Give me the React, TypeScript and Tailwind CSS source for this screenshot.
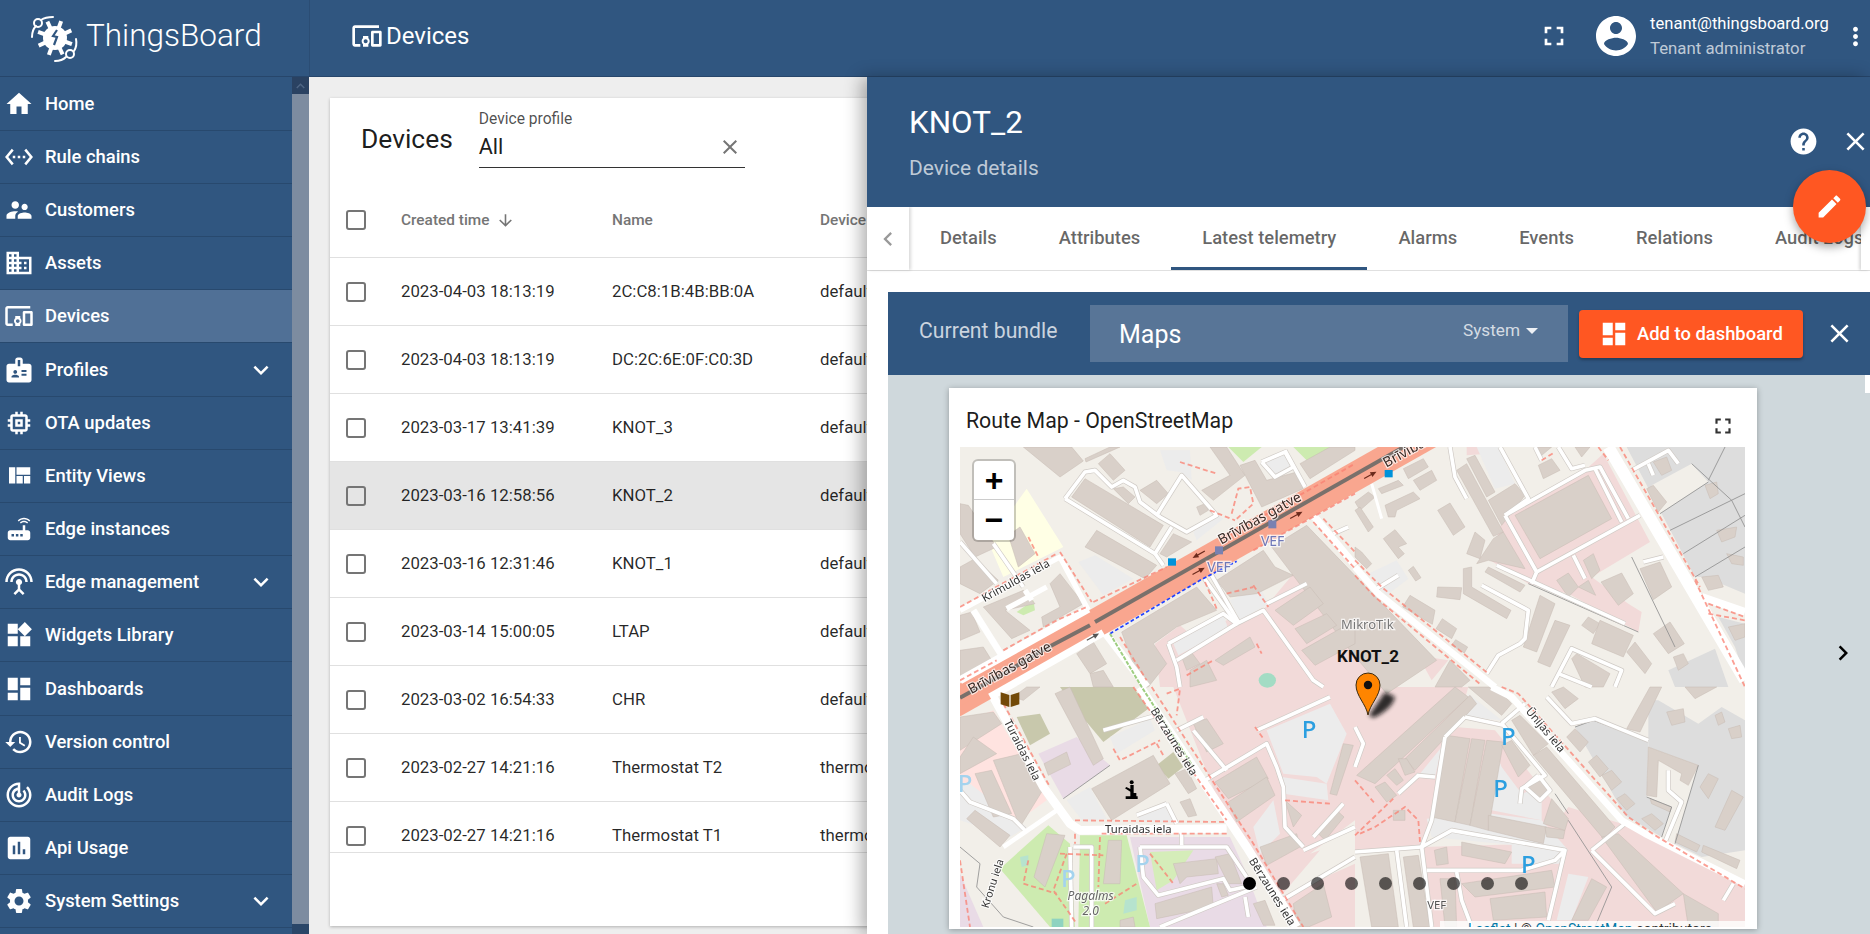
const ICONS: Record<string, string> = {
  home: 'M10 20v-6h4v6h5v-8h3L12 3 2 12h3v8z',
  rules: 'M7.77 6.76L6.23 5.48.82 12l5.41 6.52 1.54-1.28L3.42 12l4.35-5.24zM7 13h2v-2H7v2zm10-2h-2v2h2v-2zm-6 2h2v-2h-2v2zm6.77-7.52l-1.54 1.28L20.58 12l-4.35 5.24 1.54 1.28L23.18 12l-5.41-6.52z',
  customers: 'M16.5 12c1.38 0 2.49-1.12 2.49-2.5S17.88 7 16.5 7C15.12 7 14 8.12 14 9.5s1.12 2.5 2.5 2.5zM9 11c1.66 0 2.99-1.34 2.99-3S10.66 5 9 5C7.34 5 6 6.34 6 8s1.34 3 3 3zm7.5 3c-1.83 0-5.5.92-5.5 2.75V19h11v-2.25c0-1.83-3.67-2.75-5.5-2.75zM9 13c-2.33 0-7 1.17-7 3.5V19h7v-2.25c0-.85.33-2.34 2.37-3.47C10.5 13.1 9.66 13 9 13z',
  domain: 'M12 7V3H2v18h20V7H12zM6 19H4v-2h2v2zm0-4H4v-2h2v2zm0-4H4V9h2v2zm0-4H4V5h2v2zm4 12H8v-2h2v2zm0-4H8v-2h2v2zm0-4H8V9h2v2zm0-4H8V5h2v2zm10 12h-8v-2h2v-2h-2v-2h2v-2h-2V9h8v10zm-2-8h-2v2h2v-2zm0 4h-2v2h2v-2z',
  devices: 'M3 6h18V4H3c-1.1 0-2 .9-2 2v12c0 1.1.9 2 2 2h4v-2H3V6zm10 6H9v1.78c-.61.55-1 1.33-1 2.22s.39 1.67 1 2.22V20h4v-1.78c.61-.55 1-1.34 1-2.22s-.39-1.67-1-2.22V12zm-2 5.5c-.83 0-1.5-.67-1.5-1.5s.67-1.5 1.5-1.5 1.5.67 1.5 1.5-.67 1.5-1.5 1.5zM22 8h-6c-.5 0-1 .5-1 1v10c0 .5.5 1 1 1h6c.5 0 1-.5 1-1V9c0-.5-.5-1-1-1zm-1 10h-4v-8h4v8z',
  badge: 'M20 7h-5V4c0-1.1-.9-2-2-2h-2c-1.1 0-2 .9-2 2v3H4c-1.1 0-2 .9-2 2v11c0 1.1.9 2 2 2h16c1.1 0 2-.9 2-2V9c0-1.1-.9-2-2-2zM9 12c.83 0 1.5.67 1.5 1.5S9.83 15 9 15s-1.5-.67-1.5-1.5S8.17 12 9 12zm3 6H6v-.75c0-1 2-1.5 3-1.5s3 .5 3 1.5V18zm1-9h-2V4h2v5zm5 7.5h-4V15h4v1.5zm0-3h-4V12h4v1.5z',
  memory: 'M15 9H9v6h6V9zm-2 4h-2v-2h2v2zm8-2V9h-2V7c0-1.1-.9-2-2-2h-2V3h-2v2h-2V3H9v2H7c-1.1 0-2 .9-2 2v2H3v2h2v2H3v2h2v2c0 1.1.9 2 2 2h2v2h2v-2h2v2h2v-2h2c1.1 0 2-.9 2-2v-2h2v-2h-2v-2h2zm-4 6H7V7h10v10z',
  quilt: 'M10 18h5v-6h-5v6zm-6 0h5V5H4v13zm12 0h5v-6h-5v6zM10 5v6h11V5H10z',
  router: 'M20.2 5.9l.8-.8C19.6 3.7 17.8 3 16 3s-3.6.7-5 2.1l.8.8C13 4.8 14.5 4.2 16 4.2s3 .6 4.2 1.7zm-.9.8c-.9-.9-2.1-1.4-3.3-1.4s-2.4.5-3.3 1.4l.8.8c.7-.7 1.6-1 2.5-1 .9 0 1.8.3 2.5 1l.8-.8zM19 13h-2V9h-2v4H5c-1.1 0-2 .9-2 2v4c0 1.1.9 2 2 2h14c1.1 0 2-.9 2-2v-4c0-1.1-.9-2-2-2zM8 18H6v-2h2v2zm3.5 0h-2v-2h2v2zm3.5 0h-2v-2h2v2z',
  antenna: 'M12 5c-3.87 0-7 3.13-7 7h2c0-2.76 2.24-5 5-5s5 2.24 5 5h2c0-3.87-3.13-7-7-7zm1 9.29c.88-.39 1.5-1.26 1.5-2.29 0-1.38-1.12-2.5-2.5-2.5S9.5 10.62 9.5 12c0 1.02.62 1.9 1.5 2.29v3.3L7.59 21 9 22.41l3-3 3 3L16.41 21 13 17.59v-3.3zM12 1C5.93 1 1 5.93 1 12h2c0-4.97 4.03-9 9-9s9 4.03 9 9h2c0-6.07-4.93-11-11-11z',
  widgets: 'M13 13v8h8v-8h-8zM3 21h8v-8H3v8zM3 3v8h8V3H3zm13.66-1.31L11 7.34 16.66 13l5.66-5.66-5.66-5.65z',
  dashboard: 'M3 13h8V3H3v10zm0 8h8v-6H3v6zm10 0h8V11h-8v10zm0-18v6h8V3h-8z',
  history: 'M13 3c-4.97 0-9 4.03-9 9H1l3.89 3.89.07.14L9 12H6c0-3.87 3.13-7 7-7s7 3.13 7 7-3.13 7-7 7c-1.93 0-3.68-.79-4.94-2.06l-1.42 1.42C8.27 19.99 10.51 21 13 21c4.97 0 9-4.03 9-9s-4.03-9-9-9zm-1 5v5l4.28 2.54.72-1.21-3.5-2.08V8H12z',
  audit: 'M19.07 4.93l-1.41 1.41C19.1 7.79 20 9.79 20 12c0 4.42-3.58 8-8 8s-8-3.58-8-8c0-4.08 3.05-7.44 7-7.93v2.02C8.16 6.57 6 9.03 6 12c0 3.31 2.69 6 6 6s6-2.69 6-6c0-1.66-.67-3.16-1.76-4.24l-1.41 1.41C15.55 9.9 16 10.9 16 12c0 2.21-1.79 4-4 4s-4-1.79-4-4c0-1.86 1.28-3.41 3-3.86v2.14c-.6.35-1 .98-1 1.72 0 1.1.9 2 2 2s2-.9 2-2c0-.74-.4-1.38-1-1.72V2h-1C6.48 2 2 6.48 2 12s4.48 10 10 10 10-4.48 10-10c0-2.76-1.12-5.26-2.93-7.07z',
  chart: 'M19 3H5c-1.1 0-2 .9-2 2v14c0 1.1.9 2 2 2h14c1.1 0 2-.9 2-2V5c0-1.1-.9-2-2-2zM9 17H7v-7h2v7zm4 0h-2V7h2v10zm4 0h-2v-4h2v4z',
  settings: 'M19.14 12.94c.04-.3.06-.61.06-.94 0-.32-.02-.64-.07-.94l2.03-1.58c.18-.14.23-.41.12-.61l-1.92-3.32c-.12-.22-.37-.29-.59-.22l-2.39.96c-.5-.38-1.03-.7-1.62-.94l-.36-2.54c-.04-.24-.24-.41-.48-.41h-3.84c-.24 0-.43.17-.47.41l-.36 2.54c-.59.24-1.13.57-1.62.94l-2.39-.96c-.22-.08-.47 0-.59.22L2.74 8.87c-.12.21-.08.47.12.61l2.03 1.58c-.05.3-.09.63-.09.94s.02.64.07.94l-2.03 1.58c-.18.14-.23.41-.12.61l1.92 3.32c.12.22.37.29.59.22l2.39-.96c.5.38 1.03.7 1.62.94l.36 2.54c.05.24.24.41.48.41h3.84c.24 0 .44-.17.47-.41l.36-2.54c.59-.24 1.13-.56 1.62-.94l2.39.96c.22.08.47 0 .59-.22l1.92-3.32c.12-.22.07-.47-.12-.61l-2.01-1.58zM12 15.6c-1.98 0-3.6-1.62-3.6-3.6s1.62-3.6 3.6-3.6 3.6 1.62 3.6 3.6-1.62 3.6-3.6 3.6z',
  expand: 'M16.59 8.59L12 13.17 7.41 8.59 6 10l6 6 6-6z',
  fullscreen: 'M7 14H5v5h5v-2H7v-3zm-2-4h2V7h3V5H5v5zm12 7h-3v2h5v-5h-2v3zM14 5v2h3v3h2V5h-5z',
  account: 'M12 2C6.48 2 2 6.48 2 12s4.48 10 10 10 10-4.48 10-10S17.52 2 12 2zm0 3c1.66 0 3 1.34 3 3s-1.34 3-3 3-3-1.34-3-3 1.34-3 3-3zm0 14.2c-2.5 0-4.71-1.28-6-3.22.03-1.99 4-3.08 6-3.08 1.99 0 5.97 1.09 6 3.08-1.29 1.94-3.5 3.22-6 3.22z',
  more: 'M12 8c1.1 0 2-.9 2-2s-.9-2-2-2-2 .9-2 2 .9 2 2 2zm0 2c-1.1 0-2 .9-2 2s.9 2 2 2 2-.9 2-2-.9-2-2-2zm0 6c-1.1 0-2 .9-2 2s.9 2 2 2 2-.9 2-2-.9-2-2-2z',
  help: 'M12 2C6.48 2 2 6.48 2 12s4.48 10 10 10 10-4.48 10-10S17.52 2 12 2zm1 17h-2v-2h2v2zm2.07-7.75l-.9.92C13.45 12.9 13 13.5 13 15h-2v-.5c0-1.1.45-2.1 1.17-2.83l1.24-1.26c.37-.36.59-.86.59-1.41 0-1.1-.9-2-2-2s-2 .9-2 2H8c0-2.21 1.79-4 4-4s4 1.79 4 4c0 .88-.36 1.68-.93 2.25z',
  close: 'M19 6.41L17.59 5 12 10.59 6.41 5 5 6.41 10.59 12 5 17.59 6.41 19 12 13.41 17.59 19 19 17.59 13.41 12z',
  edit: 'M3 17.25V21h3.75L17.81 9.94l-3.75-3.75L3 17.25zM20.71 7.04c.39-.39.39-1.02 0-1.41l-2.34-2.34c-.39-.39-1.02-.39-1.41 0l-1.83 1.83 3.75 3.75 1.83-1.83z',
  down: 'M20 12l-1.41-1.41L13 16.17V4h-2v12.17l-5.58-5.59L4 12l8 8 8-8z',
  left: 'M15.41 7.41L14 6l-6 6 6 6 1.41-1.41L10.83 12z',
  right: 'M10 6L8.59 7.41 13.17 12l-4.58 4.59L10 18l6-6z',
}

function Icon({ name, className }: { name: string; className?: string }) {
  return (
    <svg viewBox="0 0 24 24" fill="currentColor" className={className} aria-hidden="true">
      <path d={ICONS[name]} />
    </svg>
  )
}

function Logo() {
  const spikes = [0, 45, 90, 135, 180, 225, 270, 315]
  return (
    <svg viewBox="0 0 60 56" className="h-[56px] w-[60px] shrink-0" aria-hidden="true">
      <g fill="none" stroke="#fff" strokeWidth="2" strokeLinecap="round">
        <circle cx="11" cy="13" r="4" />
        <path d="M5 27C5 22 7 18 9 16M14 10C17 8 21 7 26 7" />
        <circle cx="43" cy="44" r="4" />
        <path d="M49 29C50 34 49 38 47 41M39 47C36 50 33 51 28 51" />
      </g>
      <g stroke="#fff" strokeWidth="4">
        {spikes.map((a) => (
          <line key={a} x1="28" y1="28" x2="28" y2="10" transform={`rotate(${a + 20} 28 28)`} />
        ))}
      </g>
      <circle cx="28" cy="28" r="12" fill="#fff" />
      <path d="M30 20l-4 6 4 1-3 8" fill="none" stroke="#305680" strokeWidth="2.2" />
    </svg>
  )
}

const NAV = [
  { label: 'Home', icon: 'home' },
  { label: 'Rule chains', icon: 'rules' },
  { label: 'Customers', icon: 'customers' },
  { label: 'Assets', icon: 'domain' },
  { label: 'Devices', icon: 'devices', active: true },
  { label: 'Profiles', icon: 'badge', more: true, tall: true },
  { label: 'OTA updates', icon: 'memory' },
  { label: 'Entity Views', icon: 'quilt' },
  { label: 'Edge instances', icon: 'router' },
  { label: 'Edge management', icon: 'antenna', more: true },
  { label: 'Widgets Library', icon: 'widgets' },
  { label: 'Dashboards', icon: 'dashboard', tall: true },
  { label: 'Version control', icon: 'history' },
  { label: 'Audit Logs', icon: 'audit' },
  { label: 'Api Usage', icon: 'chart' },
  { label: 'System Settings', icon: 'settings', more: true },
]

const ROWS = [
  ['2023-04-03 18:13:19', '2C:C8:1B:4B:BB:0A', 'default'],
  ['2023-04-03 18:13:19', 'DC:2C:6E:0F:C0:3D', 'default'],
  ['2023-03-17 13:41:39', 'KNOT_3', 'default'],
  ['2023-03-16 12:58:56', 'KNOT_2', 'default'],
  ['2023-03-16 12:31:46', 'KNOT_1', 'default'],
  ['2023-03-14 15:00:05', 'LTAP', 'default'],
  ['2023-03-02 16:54:33', 'CHR', 'default'],
  ['2023-02-27 14:21:16', 'Thermostat T2', 'thermostat'],
  ['2023-02-27 14:21:16', 'Thermostat T1', 'thermostat'],
]

const TABS = ['Details', 'Attributes', 'Latest telemetry', 'Alarms', 'Events', 'Relations', 'Audit Logs']

// Map geometry is traced from the reference at 3x, one block per quadrant.
type Quad = {
  x: number
  y: number
  land: [string, string][]
  buildings: string[]
  service: string[]
  wide: [number, string][]
  foot: string[]
  lines?: string[]
}

const PINK = '#f2dad9'
const GREY = '#dddddd'
const PAVED = '#ececec'
const GREEN = '#cdebb0'
const PURPLE = '#e9dbe6'
const OLIVE = '#c8c8ac'

const QUADS: Quad[] = [
  {
    x: 0,
    y: 0,
    land: [
      ['#ffffe5', '85,285 200,125 310,300 130,390'],
      [GREEN, '805,0 905,0 850,45'],
      [GREEN, '1000,0 1125,0 1040,40'],
      [GREEN, '170,495 220,460 225,490 190,505'],
      [PINK, '585,590 660,535 700,570 800,520 900,500 1000,380 1050,380 1185,560 1185,720 600,720'],
      [PAVED, '600,10 690,10 695,100 660,75 620,70'],
      [PAVED, '355,345 405,325 520,395 430,445'],
      [PAVED, '810,460 900,420 925,470 840,520'],
      [PAVED, '640,590 790,505 805,545 655,625'],
      [PAVED, '700,255 770,200 790,215 710,280'],
      [PAVED, '905,45 975,15 1000,60 945,90'],
    ],
    buildings: [
      '190,0 335,0 370,42 300,90',
      '375,35 450,0 480,0 378,45',
      '415,50 450,20 495,70 460,100',
      '335,150 375,95 610,235 570,300',
      '460,125 490,120 525,150 505,170',
      '540,130 590,100 625,140 590,170 565,150',
      '375,300 410,250 590,355 555,395',
      '600,320 640,260 695,285 620,330',
      '750,0 800,0 855,85 760,160 725,130 810,85',
      '840,55 885,40 920,100 1010,75 1030,125 905,180',
      '1020,50 1110,0 1185,0 1185,10 1050,95',
      '710,180 735,170 745,190 720,205',
      '0,170 25,175 110,300 45,330 0,260',
      '0,360 45,335 115,400 60,440 0,410',
      '145,265 180,240 225,320 175,360',
      '70,480 190,430 225,470 135,490 210,550 155,575',
      '270,410 300,380 370,470 250,540 245,510 300,480',
      '0,505 35,495 60,555 0,580',
      '0,610 70,600 95,640 0,700',
      '485,555 710,420 770,490 650,540 580,590 620,650 565,720 545,720',
      '770,400 910,310 945,360 1000,385 890,440 810,450',
      '935,300 1040,235 1430,640 1280,740 1170,610',
      '945,490 1050,420 1090,470 1000,535',
      '1005,545 1100,500 1130,535 1040,590',
      '1025,610 1185,520 1185,590 1065,655',
      '690,670 740,640 770,700 690,720',
      '765,640 870,570 885,600 790,655',
      '665,630 690,610 720,650 680,670',
      '350,620 400,585 440,650 390,680',
      '390,680 430,670 460,720 400,720',
    ],
    service: [
      '315,155 375,75 405,70 455,120 490,100 525,120 540,165 600,210 680,255 770,205 665,85 590,205',
      '315,155 585,320 610,355',
      '635,240 585,320',
      '100,290 190,420',
      '0,285 110,410',
      '730,390 830,530',
      '755,385 835,525',
      '625,590 790,500 830,530 910,490 1060,700 1090,720',
      '625,590 650,660 660,720',
      '650,640 830,530',
      '905,45 975,15 1000,60 945,90 905,45',
      '975,10 1035,120',
      '920,470 1040,410',
      '1120,260 1165,240',
    ],
    wide: [
      [16, '0,490 300,330 385,490'],
      [16, '195,430 215,460'],
      [16, '140,485 260,420'],
      [20, '40,490 125,625'],
      [24, '430,550 560,720'],
      [22, '1060,205 1185,355'],
    ],
    foot: [
      '815,200 835,125 870,120 880,170 825,220',
      '660,45 770,80',
      '750,190 825,220',
      '205,270 235,330',
      '400,465 620,360',
      '790,275 1185,50',
      '880,310 1050,215 1185,140',
      '130,610 290,520 380,480',
      '300,315 395,465',
      '0,480 290,320',
      '735,405 770,485',
      '880,415 925,480',
      '1060,225 1185,365',
      '1090,215 1185,315',
      '800,440 880,420',
      '480,570 560,700',
      '680,685 760,640',
      '890,590 905,620',
      '0,700 110,640',
    ],
  },
  {
    x: 1185,
    y: 0,
    land: [
      [GREY, '815,0 1170,0 1170,440 1050,390 1020,390 920,200'],
      ['#f2efe9', '915,200 1060,105 1010,50 890,115'],
      [GREY, '1090,510 1170,530 1170,720 1180,720 1140,600'],
      [GREY, '940,670 1080,605 1120,720 960,720'],
      [PINK, '445,210 690,70 745,20 885,285 710,390 820,470 860,495 850,555 640,440 520,410 405,340'],
      [PINK, '335,0 430,0 400,20 335,25'],
      [PINK, '90,610 280,640 230,700 180,610 0,490 0,720'],
      [PAVED, '365,0 430,0 480,110 420,125'],
      [PAVED, '40,380 125,340 160,395 95,445'],
    ],
    buildings: [
      '145,65 205,35 220,60 160,95',
      '175,100 230,70 245,100 195,130',
      '70,125 130,100 145,115 80,140',
      '90,175 175,135 195,155 125,190 120,210 100,210',
      '0,165 40,135 60,150 15,190',
      '0,190 15,180 55,240 40,255',
      '248,190 285,168 330,240 295,265',
      '85,275 120,248 155,290 130,300 148,320 130,335',
      '0,300 20,315 50,350 35,365 0,330',
      '160,370 175,358 198,392 182,402',
      '305,70 335,50 445,255 415,268',
      '335,35 360,25 420,135 395,150',
      '400,160 480,110 510,145 440,235',
      '480,205 700,85 770,215 555,335',
      '335,320 360,255 390,280 375,335',
      '365,350 415,275 445,255 510,365 400,340',
      '390,375 400,360 510,415 495,435',
      '685,340 715,320 735,370 710,395',
      '605,400 640,378 670,420 640,450',
      '670,420 700,400 722,445',
      '738,405 800,378 835,440 790,475',
      '855,365 915,345 950,420 895,458',
      '248,420 320,422 315,458 245,450',
      '325,365 350,360 350,420 468,490 455,515 325,440',
      '143,480 165,445 240,490 232,532',
      '243,545 262,515 305,545 290,575',
      '290,595 302,578 338,600 328,618',
      '555,445 600,470 545,615 505,600',
      '600,520 645,535 585,660 548,645',
      '680,535 700,510 735,530 715,560',
      '710,590 735,520 835,565 805,630',
      '815,615 840,585 890,650 870,680',
      '895,560 945,525 988,590 940,620',
      '650,635 665,620 765,680 745,720 690,720',
      '550,55 590,35 615,70 565,95',
      '545,0 590,0 560,25',
      '660,0 705,0 680,30',
      '875,125 895,115 935,165 910,195',
      '1085,250 1145,240 1140,270 1100,285',
      '1040,390 1090,385 1105,420 1060,430',
      '1115,320 1165,330 1165,355 1130,350',
      '1120,540 1170,530 1170,570 1140,580',
      '955,630 985,620 1000,650 970,670',
      '1050,115 1085,105 1090,140 1065,155',
      '895,45 935,30 950,70 920,85',
      '240,720 285,640 345,700 320,720',
    ],
    service: [
      '450,205 690,70 735,60 820,215',
      '450,205 520,155 435,0',
      '450,205 545,375 530,410',
      '545,375 855,205',
      '655,325 690,395',
      '720,65 800,225',
      '380,415 520,490 510,575 495,590 430,625 395,680',
      '285,0 300,90 335,155',
      '65,425 130,385',
      '865,345 925,330',
      '830,70 940,10 970,50',
      '880,50 895,85',
      '540,0 560,40',
      '610,0 650,65 690,55',
      '590,720 650,605 800,670 780,720',
      '610,680 710,720',
      '425,355 810,530',
    ],
    wide: [
      [36, '760,0 1170,700'],
      [24, '1040,450 1170,495'],
      [20, '0,360 70,440 420,720'],
      [9, '50,110 80,215'],
    ],
    foot: [
      '795,0 1035,420',
      '730,0 760,40',
      '0,340 80,420 400,680',
      '0,385 60,450 380,715',
      '1020,400 1170,720',
      '1060,470 1170,510',
      '1060,500 1170,520',
      '560,40 600,15',
    ],
    lines: [
      '945,250 1170,140',
      '985,320 1170,205',
      '1020,390 1170,300',
      '915,200 1060,105',
      '1010,50 1130,160 1170,240',
      '1060,100 1110,0',
      '520,410 850,555',
      '830,330 960,600',
    ],
  },
  {
    x: 0,
    y: 720,
    land: [
      [OLIVE, '300,0 520,0 565,65 430,165 350,70'],
      [OLIVE, '170,90 240,80 270,140 210,175'],
      [OLIVE, '590,235 640,195 670,240 625,275'],
      [PURPLE, '235,200 350,150 450,235 310,335'],
      [PURPLE, '510,450 810,450 860,560 920,720 570,720'],
      [PURPLE, '0,560 70,720 0,720'],
      [GREEN, '120,545 265,415 330,470 345,720 270,720'],
      [GREEN, '360,445 500,445 570,720 355,720'],
      ['#d5edb9', '570,495 700,490 640,580 590,610'],
      ['#ffe3e0', '0,110 100,70 260,340 150,420 0,350'],
      [PINK, '640,0 1185,0 1185,400 1050,500 1080,490 960,630 1185,530 1185,720 1000,720 850,480 790,380'],
      [PAVED, '920,130 1110,50 1160,140 1100,290 1070,270 970,260'],
      [PAVED, '965,270 1100,290 1105,340 970,320'],
      [PAVED, '320,340 390,300 440,395 370,405'],
      [PAVED, '0,290 30,290 200,420 150,450 0,400'],
      [PAVED, '450,150 570,95 585,130 470,200'],
      [PAVED, '530,380 620,345 660,410 540,400'],
      [PAVED, '880,420 940,340 960,440 900,500'],
      ['#b6e3ce', '180,510 205,505 205,535 185,540'],
      ['#b6e3ce', '495,640 530,630 530,670 490,680'],
      ['#8fd3c0', '275,695 310,695 310,720 275,720'],
    ],
    buildings: [
      '395,305 580,205 630,290 455,400',
      '252,230 320,195 332,232 265,265',
      '0,90 100,75 125,110 0,190',
      '0,210 40,150 110,200 0,260',
      '45,260 95,250 155,380 100,390',
      '100,220 185,200 248,310 180,420',
      '20,395 45,370 150,445 120,480',
      '285,20 330,0 430,215 400,235',
      '645,260 680,245 710,305 685,320',
      '660,345 690,335 710,385 685,390',
      '700,110 740,95 790,170 740,195',
      '765,285 890,210 925,275 805,335',
      '805,345 920,270 945,325 830,405',
      '900,480 1010,440 1020,480 920,535',
      '1075,440 1130,370 1152,390 1095,460',
      '1110,320 1150,170 1180,175 1130,325',
      '975,340 1025,385 1000,420',
      '445,460 485,460 480,590 430,590',
      '222,570 260,440 315,445 255,600',
      '640,530 770,515 775,560 680,570 660,590',
      '765,510 810,500 845,590 805,590',
      '585,650 755,600 760,660 590,695',
      '880,650 915,640 945,715 910,715',
      '770,590 790,590 805,625 785,630',
      '1000,650 1090,590 1115,690 1045,720 1010,720',
      '480,700 520,690 525,720 480,720',
      '160,30 200,0 240,0 190,40',
    ],
    service: [
      '430,130 590,85',
      '650,130 730,90',
      '890,130 1110,30',
      '735,280 920,170 950,240 970,300 975,420 1030,480',
      '1185,420 1030,490',
      '965,640 1185,510',
      '600,720 890,600',
      '540,480 800,480 860,570',
      '540,480 550,570 595,625 790,575 810,610 855,600',
      '665,430 665,475',
      '620,350 650,410',
      '530,385 620,350',
      '855,630 865,690',
      '340,480 395,480 395,720',
      '330,480 335,720',
      '0,310 30,345 160,395 195,430',
      '700,130 800,250',
      '1060,450 1150,350',
    ],
    wide: [
      [26, '100,30 250,300 330,410 360,430 800,425'],
      [26, '540,0 860,480 1010,720'],
      [14, '130,480 290,370'],
    ],
    foot: [
      '130,50 270,300',
      '345,400 800,405',
      '345,440 345,470',
      '800,440 420,440',
      '575,0 880,470 1030,720',
      '520,0 800,400',
      '460,185 480,220 600,160',
      '590,170 610,205',
      '620,20 660,5 650,85',
      '885,120 910,155',
      '975,340 1110,350',
      '205,520 190,590 290,620',
      '300,500 430,505',
      '420,450 415,600',
      '320,500 280,610 350,710',
      '435,650 530,590',
      '570,500 640,590',
      '0,520 30,720',
    ],
    lines: ['310,335 450,235', '0,480 60,530 50,600 130,690 220,720'],
  },
  {
    x: 1185,
    y: 720,
    land: [
      [PINK, '0,0 120,0 340,0 200,480 0,495'],
      [PINK, '560,470 640,360 800,410 1170,590 1170,720 230,720 200,480'],
      [PINK, '230,300 300,120 420,130 640,400 600,480'],
      [GREY, '660,120 715,100 880,160 875,330 950,360 920,450 810,385'],
      [GREY, '880,40 910,40 1030,110 1100,60 1170,100 1170,490 1040,510 960,470 1030,235 880,180'],
      [PAVED, '215,395 410,380 560,400 640,490 230,450'],
      [PAVED, '410,170 440,240 500,320 560,300 560,400 410,370'],
      [PAVED, '640,560 700,570 650,700 605,700'],
      [PAVED, '470,470 630,495 620,530 470,530'],
      [PAVED, '340,20 440,100 330,90'],
      [PAVED, '195,260 260,180 240,270'],
    ],
    buildings: [
      '5,265 300,0 340,30 60,290',
      '150,215 345,25 365,50 180,250',
      '130,215 155,215 180,255 150,265',
      '60,300 90,285 125,325 95,345',
      '95,265 120,245 145,280 125,295',
      '115,370 150,370 150,400 115,400',
      '230,390 275,145 345,155 300,405',
      '300,405 350,155 390,160 345,415',
      '345,415 395,160 445,165 400,430',
      '400,385 575,420 565,470 400,430',
      '570,420 630,430 625,455 575,450',
      '565,410 590,335 640,395 630,430',
      '440,175 470,160 525,235 490,270',
      '515,300 550,272 585,310 550,335',
      '470,100 495,85 580,170 535,205',
      '535,205 575,180 780,420 745,455',
      '740,450 790,440 985,620 905,675',
      '985,620 1090,680 1090,720 1000,720',
      '340,0 420,0 470,50 440,85',
      '815,125 885,0 920,0 855,135',
      '590,15 625,0 670,35 630,65',
      '635,150 660,125 700,165 675,195',
      '700,225 725,205 760,245 735,270',
      '740,265 770,250 800,285 770,310',
      '785,335 810,320 840,350 815,370',
      '860,395 890,380 925,410 900,430',
      '935,75 985,65 990,105 950,115',
      '1080,85 1100,75 1110,105 1090,115',
      '1120,125 1155,115 1160,150 1130,155',
      '1035,300 1060,260 1090,275 1060,335',
      '1080,420 1130,310 1165,330 1110,430',
      '990,0 1085,0 1020,35',
      '880,180 1030,235 1000,295 975,280 980,260 910,220 905,330 875,325',
      '885,335 950,360 945,375 890,350',
      '965,440 1035,475 1025,495 960,465',
      '1045,475 1155,520 1145,545 1040,495',
      '320,465 470,495 450,530 320,505',
      '238,490 275,480 280,530 245,535',
      '15,510 100,500 130,720 50,720',
      '145,510 190,505 225,720 175,720',
      '255,575 300,575 305,720 270,720',
      '320,590 590,550 600,600 360,630',
      '405,635 570,615 575,690 415,700',
      '650,700 710,575 755,600 700,700',
    ],
    service: [
      '200,480 290,430 630,490',
      '0,495 200,480',
      '125,490 155,720',
      '200,480 230,720',
      '215,550 500,550 600,520 630,490 580,700',
      '305,555 320,640 350,720',
      '330,90 445,115 570,265 500,305 495,350',
      '270,150 230,400 200,480',
      '330,90 270,150',
      '550,265 585,310 555,340 510,300 550,265',
      '440,110 510,50',
      '185,265 240,270',
      '130,320 190,265',
      '575,30 650,110 720,95 880,160',
      '710,490 810,410',
      '710,490 900,680 960,650',
      '1135,590 1105,640',
      '940,250 940,310 980,345 930,465',
      '0,120 25,170 0,240',
    ],
    wide: [[20, '410,0 470,30 800,400 870,440 1170,590']],
    foot: [
      '440,0 490,20 820,390 900,445 1170,605',
      '0,445 120,330',
      '15,440 60,420 150,360 190,400 195,465',
      '0,280 60,350',
    ],
    lines: ['640,400 770,600 720,720', '600,320 640,380', '660,120 715,100 880,160', '875,330 950,360 920,450', '1030,235 960,470'],
  },
]

const HALO = { paintOrder: 'stroke', stroke: '#fff', strokeWidth: 7, strokeOpacity: 0.75 } as const

function Label({ x, y, r = 0, size = 28, fill = '#333', text, italic }: { x: number; y: number; r?: number; size?: number; fill?: string; text: string; italic?: boolean }) {
  return (
    <text
      x={x}
      y={y}
      transform={`rotate(${r} ${x} ${y})`}
      textAnchor="middle"
      dominantBaseline="middle"
      fontFamily='"Noto Sans", sans-serif'
      fontSize={size}
      fontStyle={italic ? 'italic' : 'normal'}
      fill={fill}
      style={HALO}
    >
      {text}
    </text>
  )
}

function Park({ x, y, faded }: { x: number; y: number; faded?: boolean }) {
  return (
    <text x={x} y={y} textAnchor="middle" dominantBaseline="middle" fontFamily='"Noto Sans", sans-serif' fontSize="72" fontWeight="500" fill={faded ? '#a4d3ee' : '#2c9fe0'}>
      P
    </text>
  )
}

function Arrow({ x, y, fill = '#6b2a1c', flip }: { x: number; y: number; fill?: string; flip?: boolean }) {
  return (
    <g transform={`translate(${x} ${y}) rotate(${flip ? 151 : -29})`}>
      <path d="M-20 0H8" stroke={fill} strokeWidth="3.5" />
      <path d="M22 0L4-8V8z" fill={fill} />
    </g>
  )
}

function MapArt() {
  return (
    <svg viewBox="0 0 2355 1440" className="block h-[480px] w-[785px] blur-[0.5px]" aria-hidden="true">
      <defs>
        <filter id="pin-shadow" x="-40%" y="-40%" width="180%" height="180%">
          <feGaussianBlur stdDeviation="7" />
        </filter>
      </defs>
      <rect width="2355" height="1440" fill="#f2efe9" />
      {QUADS.map((q) => (
        <g key={`land-${q.x}-${q.y}`} transform={`translate(${q.x} ${q.y})`}>
          {q.land.map(([fill, pts], i) => (
            <polygon key={i} points={pts} fill={fill} />
          ))}
        </g>
      ))}
      <ellipse cx="922" cy="700" rx="26" ry="22" fill="#a3dcc4" />
      {QUADS.map((q) => (
        <g key={`build-${q.x}-${q.y}`} transform={`translate(${q.x} ${q.y})`} fill="#d9d0c9" stroke="#c6bbb2" strokeWidth="1.5">
          {q.buildings.map((pts, i) => (
            <polygon key={i} points={pts} />
          ))}
        </g>
      ))}
      {QUADS.map((q) => (
        <g key={`lines-${q.x}-${q.y}`} transform={`translate(${q.x} ${q.y})`} fill="none" stroke="#8f8f8f" strokeWidth="2.5">
          {(q.lines ?? []).map((pts, i) => (
            <polyline key={i} points={pts} />
          ))}
        </g>
      ))}
      {QUADS.map((q) => (
        <g key={`roads-${q.x}-${q.y}`} transform={`translate(${q.x} ${q.y})`} fill="none" strokeLinejoin="round">
          {q.service.map((pts, i) => (
            <polyline key={`c${i}`} points={pts} stroke="#cfcac5" strokeWidth="15" />
          ))}
          {q.service.map((pts, i) => (
            <polyline key={`s${i}`} points={pts} stroke="#fff" strokeWidth="11" />
          ))}
          {q.wide.map(([w, pts], i) => (
            <polyline key={`w${i}`} points={pts} stroke="#fff" strokeWidth={w} />
          ))}
        </g>
      ))}
      {/* Brivibas gatve */}
      <polyline points="-20,770 1500,-90" fill="none" stroke="#f9a68f" strokeWidth="86" />
      <polyline points="0,700 385,485" fill="none" stroke="#fff" strokeWidth="24" />
      <polyline points="90,750 430,557" fill="none" stroke="#fff" strokeWidth="22" />
      <polyline points="-20,765 90,705" fill="none" stroke="#f9a68f" strokeWidth="38" />
      <polyline points="-10,760 235,620" fill="none" stroke="#f9a68f" strokeWidth="40" />
      <polyline points="0,752 130,680 262,602 390,535" fill="none" stroke="#79706b" strokeWidth="12" />
      <polyline points="405,525 1340,-5" fill="none" stroke="#79706b" strokeWidth="12" />
      <polyline points="450,560 720,400 830,343" fill="none" stroke="#2040ff" strokeWidth="5" strokeDasharray="11 7" />
      {QUADS.map((q) => (
        <g key={`foot-${q.x}-${q.y}`} transform={`translate(${q.x} ${q.y})`} fill="none" stroke="#fa8072" strokeWidth="5.5" strokeDasharray="15 9" opacity="0.75">
          {q.foot.map((pts, i) => (
            <polyline key={i} points={pts} />
          ))}
        </g>
      ))}
      <polyline points="450,560 545,720 700,960" fill="none" stroke="#9fce82" strokeWidth="6" strokeDasharray="12 4" />

      <rect x="624" y="334" width="24" height="22" fill="#0092da" />
      <rect x="1274" y="69" width="24" height="22" fill="#0092da" />
      <rect x="765" y="298" width="24" height="24" fill="#7981b1" />
      <rect x="925" y="220" width="24" height="24" fill="#7981b1" />
      <Arrow x={715} y={373} />
      <Arrow x={717} y={322} flip />
      <Arrow x={1008} y={205} />
      <Arrow x={1230} y={85} />
      <Arrow x={398} y={570} fill="#555" />

      <Label x={900} y={216} r={-29} size={42} fill="#3b2b26" text="Brīvības gatve" />
      <Label x={150} y={665} r={-29} size={42} fill="#3b2b26" text="Brīvības gatve" />
      <Label x={1395} y={-15} r={-29} size={42} fill="#3b2b26" text="Brīvības gatve" />
      <Label x={938} y={285} size={42} fill="#6f78b8" text="VEF" />
      <Label x={777} y={364} size={42} fill="#6f78b8" text="VEF" />
      <Label x={168} y={403} r={-29} size={34} text="Krimuldas iela" />
      <Label x={1222} y={535} size={39} fill="#777" text="MikroTik" />
      <Label x={185} y={910} r={63} size={34} text="Turaidas iela" />
      <Label x={535} y={1150} size={34} text="Turaidas iela" />
      <Label x={640} y={885} r={58} size={34} text="Bērzaunes iela" />
      <Label x={935} y={1335} r={58} size={34} text="Bērzaunes iela" />
      <Label x={100} y={1310} r={-72} size={32} text="Kronu iela" />
      <Label x={392} y={1348} size={36} fill="#666" italic text="Pagalms" />
      <Label x={392} y={1395} size={36} fill="#666" italic text="2.0" />
      <Label x={1755} y={850} r={50} size={34} text="Ūnijas iela" />
      <Label x={1430} y={1377} size={34} fill="#555" text="VEF" />

      <Park x={1047} y={855} />
      <Park x={15} y={1015} faded />
      <Park x={325} y={1300} faded />
      <Park x={548} y={1255} faded />
      <Park x={1645} y={875} />
      <Park x={1622} y={1030} />
      <Park x={1705} y={1260} />

      {/* library and monument symbols */}
      <g transform="translate(150 758)" fill="#734a08">
        <path d="M-28-22L-2-14V22L-28 14zM28-22L2-14V22L28 14z" />
      </g>
      <g transform="translate(515 1030)" fill="#000">
        <circle cx="0" cy="-24" r="6" />
        <path d="M-4-16H6V8H14V18H18V26H-18V18H-4V4L-20-6L-16-10L-4-4z" />
      </g>
      <path d="M1227 805L1275 735L1305 750C1300 775 1270 800 1240 812z" fill="#111" opacity="0.85" filter="url(#pin-shadow)" />
    </svg>
  )
}

function Pin() {
  return (
    <svg viewBox="0 0 26 44" className="h-[44px] w-[26px]" aria-hidden="true">
      <path d="M13 43C11 32 1 24 1 13a12 12 0 0 1 24 0C25 24 15 32 13 43z" fill="#ff8500" stroke="#3b2a10" strokeWidth="1" />
      <circle cx="13" cy="13" r="4.2" fill="#111" />
    </svg>
  )
}

function Checkbox() {
  return <span className="block h-5 w-5 rounded-[3px] border-2 border-[#757575]" />
}

export default function App() {
  return (
    <div className="relative h-[934px] w-[1870px] overflow-hidden bg-[#eeeeee] font-['Roboto',sans-serif] text-[16.8px]">
      {/* Top bar */}
      <header className="flex h-[77px] border-b border-[#27466b] bg-[#305680] text-white">
        <div className="flex w-[310px] items-center border-r border-[#2b4d74] pl-[27px]">
          <Logo />
          <span className="-ml-[1px] pb-[5px] text-[31.5px] leading-none font-light">ThingsBoard</span>
        </div>
        <div className="flex flex-1 items-center pb-[4px] pl-[41px]">
          <Icon name="devices" className="mr-[3px] h-[32px] w-[32px]" />
          <span className="text-[24px]">Devices</span>
          <Icon name="fullscreen" className="mr-[22px] ml-auto h-[32px] w-[32px]" />
          <Icon name="account" className="h-[48px] w-[48px]" />
          <div className="ml-[10px] flex w-[191px] flex-col gap-[6px] leading-[19px]">
            <span className="text-[16.6px]">tenant@thingsboard.org</span>
            <span className="text-[16.8px] text-white/70">Tenant administrator</span>
          </div>
          <Icon name="more" className="h-[29px] w-[29px]" />
          <span className="w-[0px]" />
        </div>
      </header>

      <div className="flex h-[857px]">
        {/* Side menu */}
        <nav className="flex w-[292px] flex-col bg-[#305680] pt-[1px] text-white">
          {NAV.map((item) => (
            <div
              key={item.label}
              className={`flex shrink-0 items-center border-b border-[#28496e] pl-[4px] ${item.tall ? 'h-[54px]' : 'h-[53px]'} ${item.active ? 'bg-[#507096]' : ''}`}
            >
              <Icon name={item.icon} className="h-[30px] w-[30px] shrink-0" />
              <span className="ml-[11px] text-[18.4px] font-medium">{item.label}</span>
              {item.more && <Icon name="expand" className="mr-[16px] ml-auto h-[30px] w-[30px]" />}
            </div>
          ))}
        </nav>
        <div className="flex w-[17px] flex-col justify-between bg-[#7d8ca0]">
          <div className="flex h-[17px] items-center justify-center bg-[#2a4262] text-[#4f6685]">
            <Icon name="expand" className="h-[18px] w-[18px] rotate-180" />
          </div>
          <div className="h-[10px] bg-[#2a4668]" />
        </div>

        {/* Devices table */}
        <main className="flex-1 pt-[21px] pr-[20px] pl-[21px]">
          <div className="h-[828px] bg-white shadow-[0_1px_3px_rgba(0,0,0,0.25)]">
            <div className="flex h-[84px] text-black/90">
              <span className="mt-[20px] ml-[31px] text-[26.4px] leading-[42px]">Devices</span>
              <div className="ml-[26px] flex h-[70px] w-[266px] flex-col border-b border-[#333] pt-[11px]">
                <span className="text-[15.6px] leading-[20px] text-black/70">Device profile</span>
                <div className="flex items-center justify-between">
                  <span className="text-[21.6px] leading-[36px]">All</span>
                  <Icon name="close" className="mr-[3px] h-[24px] w-[24px] text-[#757575]" />
                </div>
              </div>
            </div>
            <div className="flex h-[76px] items-center border-b border-[#e0e0e0] text-[15.4px] font-medium text-[#757575]">
              <div className="w-[71px] pl-[16px]">
                <Checkbox />
              </div>
              <div className="flex w-[211px] items-center gap-[7px] pt-[2px]">
                Created time
                <Icon name="down" className="h-[19px] w-[19px]" />
              </div>
              <div className="w-[208px] pt-[2px]">Name</div>
              <div className="pt-[2px]">Device profile</div>
            </div>
            <div className="h-[595px] overflow-hidden border-b border-[#e0e0e0]">
              {ROWS.map((row) => (
                <div key={row[0] + row[1]} className={`flex h-[68px] items-center border-b border-[#e0e0e0] pt-[1px] text-black/85 ${row[1] === 'KNOT_2' ? 'bg-[#e5e5e5]' : ''}`}>
                  <div className="w-[71px] pl-[16px]">
                    <Checkbox />
                  </div>
                  <div className="w-[211px]">{row[0]}</div>
                  <div className="w-[208px]">{row[1]}</div>
                  <div>{row[2]}</div>
                </div>
              ))}
            </div>
          </div>
        </main>
      </div>

      {/* Device details drawer */}
      <aside className="absolute top-[77px] right-0 bottom-0 flex w-[1003px] flex-col bg-white shadow-[-6px_0_16px_rgba(0,0,0,0.3)]">
        <div className="relative flex h-[130px] shrink-0 bg-[#305680] text-white">
          <div className="pt-[25px] pl-[42px]">
            <div className="text-[31.4px] leading-[42px]">KNOT_2</div>
            <div className="mt-[10px] text-[21px] leading-[28px] text-white/70">Device details</div>
          </div>
          <div className="ml-auto flex gap-[21px] pt-[49px] pr-0">
            <Icon name="help" className="h-[31px] w-[31px]" />
            <Icon name="close" className="-mr-[1px] h-[31px] w-[31px]" />
          </div>
          <div className="absolute top-[93px] right-[4px] z-10 flex h-[73px] w-[73px] items-center justify-center rounded-full bg-[#ff5722] shadow-[0_4px_10px_rgba(0,0,0,0.35)]">
            <Icon name="edit" className="h-[29px] w-[29px]" />
          </div>
        </div>

        <div className="flex h-[64px] shrink-0 border-b border-[#e0e0e0]">
          <div className="flex w-[42px] shrink-0 items-center justify-center text-black/40 shadow-[2px_0_3px_rgba(0,0,0,0.15)]">
            <Icon name="left" className="h-[28px] w-[28px]" />
          </div>
          <div className="flex w-[952px] overflow-hidden">
            {TABS.map((tab) => (
              <div
                key={tab}
                className={`flex h-[63px] shrink-0 items-center border-b-[3px] px-[31px] pt-[1px] text-[18.4px] font-medium whitespace-nowrap text-black/60 ${tab === 'Latest telemetry' ? 'border-[#305680]' : 'border-transparent'}`}
              >
                {tab}
              </div>
            ))}
          </div>
          <div className="w-[9px] shadow-[-2px_0_3px_rgba(0,0,0,0.15)]" />
        </div>

        <div className="mt-[21px] ml-[21px] flex min-h-0 flex-1 flex-col">
          <div className="flex h-[83px] shrink-0 items-center bg-[#305680] text-white">
            <span className="w-[202px] pb-[5px] pl-[31px] text-[21.2px] text-white/75">Current bundle</span>
            <div className="flex h-[57px] w-[478px] items-center justify-between bg-[#587597] pr-[30px] pl-[29px]">
              <span className="pt-[3px] text-[25px]">Maps</span>
              <span className="flex items-center gap-[6px] pb-[5px] text-[17.2px] text-white/75">
                System
                <span className="h-0 w-0 border-x-[6px] border-t-[6px] border-x-transparent border-t-white/90" />
              </span>
            </div>
            <div className="ml-[11px] flex h-[48px] w-[224px] items-center rounded-[4px] bg-[#ff5722] pl-[20px] font-medium shadow-[0_2px_3px_rgba(0,0,0,0.3)]">
              <Icon name="dashboard" className="h-[30px] w-[30px]" />
              <span className="ml-[8px] text-[18.4px] whitespace-nowrap">Add to dashboard</span>
            </div>
            <Icon name="close" className="ml-[21px] h-[31px] w-[31px]" />
          </div>

          <div className="relative min-h-0 flex-1 bg-[#cfd8dc] pt-[13px] pl-[61px]">
            <div className="h-[541px] w-[808px] overflow-hidden bg-white shadow-[0_1px_6px_rgba(0,0,0,0.3)]">
              <div className="flex h-[59px] items-center justify-between pt-[6px] pr-[21px] pl-[17px]">
                <span className="text-[21.3px] text-black/90">Route Map - OpenStreetMap</span>
                <Icon name="fullscreen" className="mt-[10px] h-[26px] w-[26px] text-black/80" />
              </div>
              <div className="relative mx-[11px] h-[480px] w-[785px] overflow-hidden">
                <MapArt />

                <div className="absolute top-[14px] left-[14px] flex w-[40px] flex-col overflow-hidden rounded-[4px] bg-white text-black shadow-[0_0_0_2px_rgba(0,0,0,0.2)]">
                  <span className="flex h-[39px] items-center justify-center border-b border-[#ccc] font-['Liberation_Sans',sans-serif] text-[32px] leading-none font-bold">+</span>
                  <span className="flex h-[40px] items-center justify-center font-['Liberation_Sans',sans-serif] text-[32px] leading-none font-bold">−</span>
                </div>

                <span className="absolute top-[200px] left-[372px] w-[72px] text-center text-[17px] leading-[18px] font-bold text-[#111]">KNOT_2</span>
                <div className="absolute top-[225px] left-[395px]">
                  <Pin />
                </div>

                <div className="absolute top-[430px] left-[283px] flex gap-[21px]">
                  <span className="h-[13px] w-[13px] rounded-full bg-black" />
                  {[1, 2, 3, 4, 5, 6, 7, 8].map((d) => (
                    <span key={d} className="h-[13px] w-[13px] rounded-full bg-black/60" />
                  ))}
                </div>

                <div className="absolute right-0 bottom-0 h-[6px] w-[305px] bg-white/80 pl-[28px] text-[14px] leading-[16px] whitespace-nowrap text-[#333]">
                  <span className="text-[#0078a8]">Leaflet</span> | © <span className="text-[#0078a8]">OpenStreetMap</span> contributors
                </div>
              </div>
            </div>
            <div className="absolute top-[263px] right-[12px] text-black">
              <Icon name="right" className="h-[30px] w-[30px]" />
            </div>
            <div className="absolute top-0 right-0 h-[18px] w-[5px] bg-white" />
          </div>
        </div>
      </aside>
    </div>
  )
}
